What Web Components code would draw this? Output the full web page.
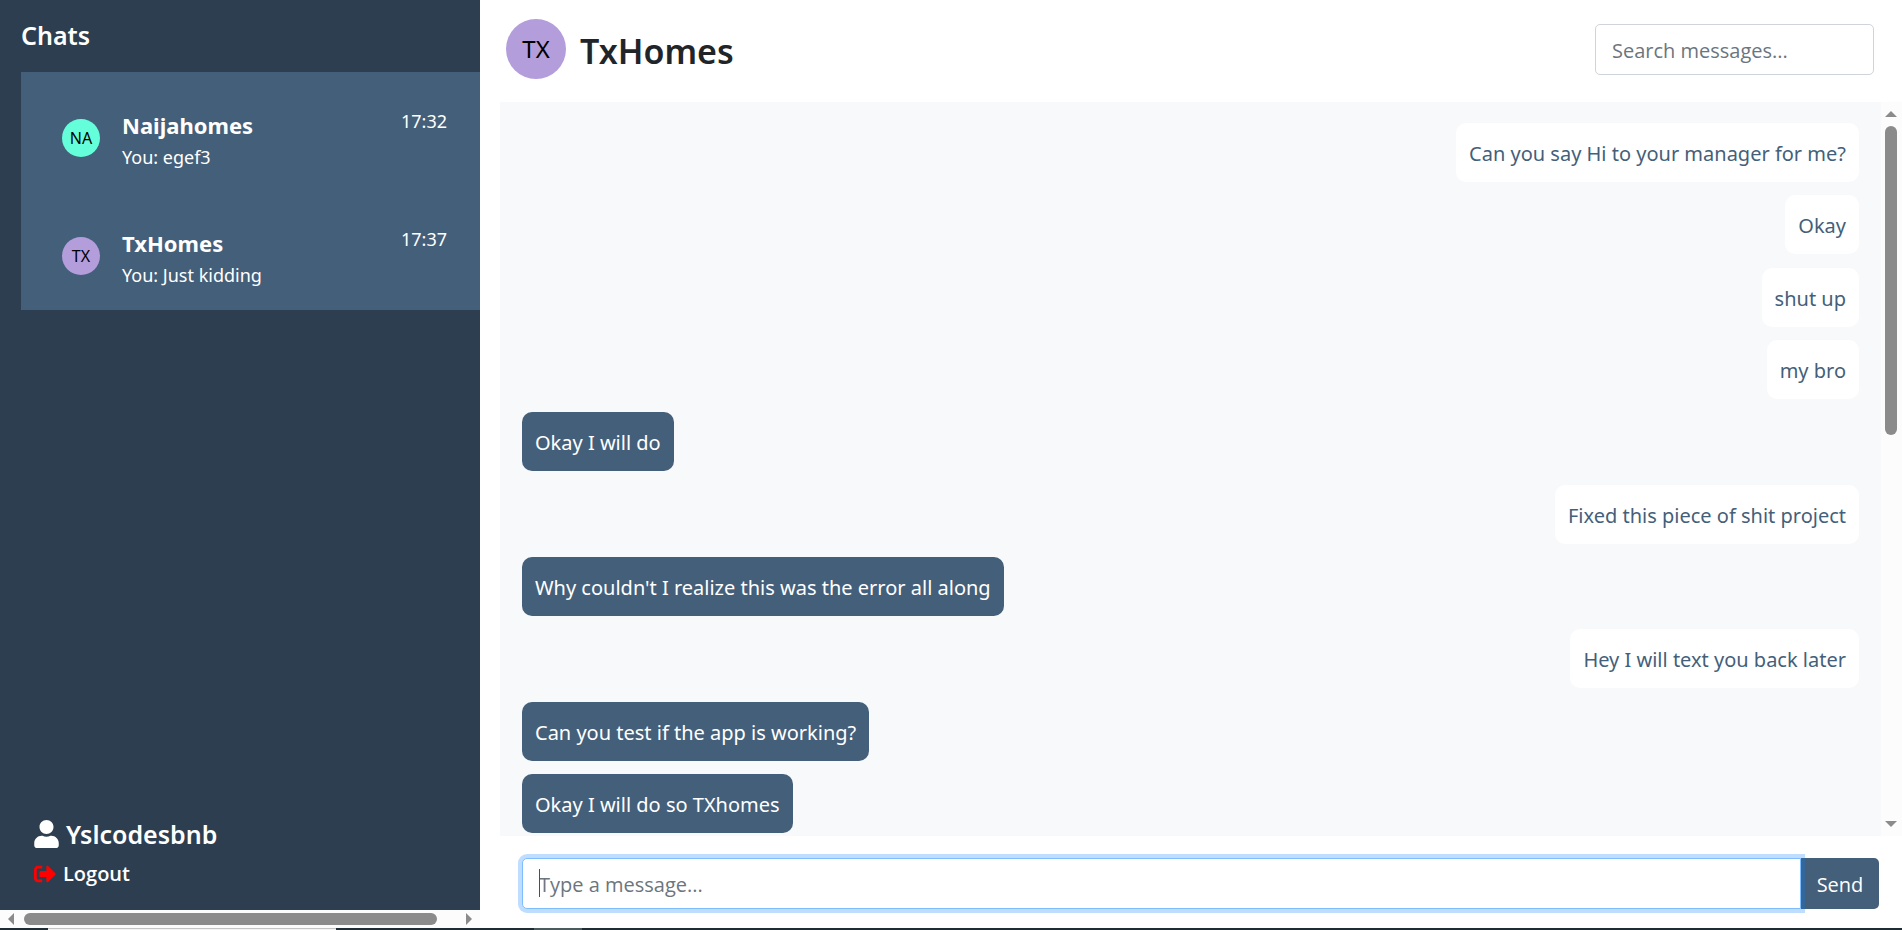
<!DOCTYPE html>
<html lang="en">
<head>
<meta charset="utf-8">
<title>Chats</title>
<style>
html, body { margin: 0; height: 100%; }
body { font-family: "Noto Sans", "Open Sans", sans-serif; font-size: 20px; line-height: 32px; color: #212529; background: #fff; overflow: hidden;
  --navy: #2c3e50; --steel: #445f7a; --track: #fcfcfc; --thumb: #8b8b8b; --muted: #6c757d; --control-font: "Open Sans", "Noto Sans", sans-serif; }
</style>
</head>
<body>
<chat-app>
  <chat-sidebar slot="side">
    <chat-item initials="NA" tint="#64ffda" time="17:32"><span slot="name">Naijahomes</span>You: egef3</chat-item>
    <chat-item initials="TX" tint="#b39ddb" time="17:37"><span slot="name">TxHomes</span>You: Just kidding</chat-item>
    <user-panel slot="foot">Yslcodesbnb</user-panel>
  </chat-sidebar>
  <scroll-track slot="side" axis="x" style="--size: 413; --after: 19"></scroll-track>
  <chat-header initials="TX" tint="#b39ddb">TxHomes</chat-header>
  <message-list>
    <chat-message mine>Can you say Hi to your manager for me?</chat-message>
    <chat-message mine>Okay</chat-message>
    <chat-message mine>shut up</chat-message>
    <chat-message mine>my bro</chat-message>
    <chat-message>Okay I will do</chat-message>
    <chat-message mine>Fixed this piece of shit project</chat-message>
    <chat-message>Why couldn't I realize this was the error all along</chat-message>
    <chat-message mine>Hey I will text you back later</chat-message>
    <chat-message>Can you test if the app is working?</chat-message>
    <chat-message>Okay I will do so TXhomes</chat-message>
  </message-list>
  <message-composer></message-composer>
  <task-strip slot="strip"></task-strip>
</chat-app>

<script>
function define(name, html, setup) {
  const template = document.createElement('template');
  template.innerHTML = html;
  customElements.define(name, class extends HTMLElement {
    constructor() {
      super();
      this.attachShadow({ mode: 'open' }).append(template.content.cloneNode(true));
    }
    connectedCallback() { if (setup) setup(this, this.shadowRoot); }
  });
}

define('chat-app', `
<style>
:host { display: flex; flex-direction: column; height: 100vh; }
.cols { flex: 1; min-height: 0; display: flex; }
aside { flex: 0 0 480px; display: flex; flex-direction: column; }
main { flex: 1; min-width: 0; display: flex; flex-direction: column; padding-left: 20px; }
</style>
<div class="cols"><aside><slot name="side"></slot></aside><main><slot></slot></main></div>
<slot name="strip"></slot>`);

define('chat-sidebar', `
<style>
:host { flex: 1; min-height: 0; box-sizing: border-box; display: flex; flex-direction: column; background: var(--navy); color: #fff; padding: 19px 0 18px 21px; }
h2 { margin: 0 0 21px; font-size: 25px; line-height: 32px; font-weight: 600; }
nav { background: var(--steel); padding-bottom: 2px; }
footer { margin-top: auto; padding-left: 13px; }
</style>
<h2>Chats</h2>
<nav aria-label="Chats"><slot></slot></nav>
<footer><slot name="foot"></slot></footer>`);

define('user-avatar', `
<style>
:host { flex: none; display: flex; align-items: center; justify-content: center; width: 38px; height: 38px; border-radius: 50%; color: #000; font-size: 16px; line-height: 24px; }
:host([large]) { width: 60px; height: 60px; font-size: 24px; }
</style>
<slot></slot>`);

const fillAvatar = (host, root) => {
  const avatar = root.querySelector('user-avatar');
  avatar.textContent = host.getAttribute('initials');
  avatar.style.background = host.getAttribute('tint');
};

define('chat-item', `
<style>
:host { display: block; }
a { display: flex; align-items: flex-start; height: 118px; box-sizing: border-box; padding: 37px 33px 0 41px; color: inherit; text-decoration: none; }
user-avatar { margin: 10px 22px 0 0; }
.body { flex: 1; min-width: 0; font-size: 18px; line-height: 32px; }
.name { font-size: 22px; line-height: 32px; font-weight: 700; }
time { font-size: 18px; line-height: 24px; }
</style>
<a href="#"><user-avatar></user-avatar><div class="body"><div class="name"><slot name="name"></slot></div><slot></slot></div><time></time></a>`,
(host, root) => { fillAvatar(host, root); root.querySelector('time').textContent = host.getAttribute('time'); });

define('user-panel', `
<style>
:host { display: block; font-weight: 600; }
.user { display: flex; align-items: center; gap: 7px; font-size: 25px; line-height: 36px; }
button { display: flex; align-items: center; gap: 7px; margin: 4px 0 0; padding: 0; border: 0; background: none; color: inherit; font: inherit; font-family: var(--control-font); font-size: 20px; line-height: 36px; cursor: pointer; }
svg { display: block; fill: currentColor; }
button svg { fill: #f00; }
</style>
<div class="user"><svg width="25" height="28" viewBox="0 0 448 512" aria-hidden="true"><path d="M224 256c70.7 0 128-57.3 128-128S294.700 0 224 0 96 57.300 96 128s57.300 128 128 128zm89.600 32h-16.700c-22.200 10.200-46.900 16-72.900 16s-50.600-5.800-72.900-16h-16.700C60.200 288 0 348.200 0 422.400V464c0 26.500 21.500 48 48 48h352c26.500 0 48-21.500 48-48v-41.600c0-74.200-60.200-134.400-134.400-134.400z"/></svg><span><slot></slot></span></div>
<button type="button"><svg width="22" height="22" viewBox="0 0 512 512" aria-hidden="true"><path d="M497 273L329 441c-15 15-41 4.500-41-17v-96H152c-13.300 0-24-10.700-24-24v-96c0-13.300 10.700-24 24-24h136V88c0-21.400 25.900-32 41-17l168 168c9.300 9.400 9.300 24.600 0 34zM192 436v-40c0-6.600-5.400-12-12-12H96c-17.700 0-32-14.300-32-32V160c0-17.700 14.300-32 32-32h84c6.600 0 12-5.400 12-12V76c0-6.600-5.400-12-12-12H96c-53 0-96 43-96 96v192c0 53 43 96 96 96h84c6.600 0 12-5.400 12-12z"/></svg>Logout</button>`);

define('scroll-track', `
<style>
:host { flex: none; display: flex; align-items: center; box-sizing: border-box; background: var(--track); gap: 10px; }
:host([axis="x"]) { height: 18px; padding: 0 8px; }
:host([axis="y"]) { width: 21px; flex-direction: column; padding: 9px 5px 9px 4px; gap: 9px; }
svg { flex: none; display: block; fill: var(--thumb); }
.rail { flex: 1; align-self: stretch; display: flex; align-items: center; }
:host([axis="y"]) .rail { flex-direction: column; }
.thumb { flex: var(--size) 0 0; border-radius: 6px; background: var(--thumb); }
:host([axis="x"]) .thumb { height: 12px; }
:host([axis="y"]) .thumb { width: 12px; }
.rest { flex: var(--after) 0 0; }
:host([axis="x"]) .v, :host([axis="y"]) .h { display: none; }
</style>
<svg class="h" width="6" height="12" viewBox="0 0 6 12"><path d="M6 0v12L0 6z"/></svg>
<svg class="v" width="12" height="6" viewBox="0 0 12 6"><path d="M0 6h12L6 0z"/></svg>
<div class="rail"><div class="thumb"></div><div class="rest"></div></div>
<svg class="h" width="6" height="12" viewBox="0 0 6 12"><path d="M0 0v12l6-6z"/></svg>
<svg class="v" width="12" height="6" viewBox="0 0 12 6"><path d="M0 0h12L6 6z"/></svg>`);

define('chat-header', `
<style>
:host { flex: none; display: flex; align-items: center; gap: 14px; height: 102px; box-sizing: border-box; padding: 0 28px 4px 6px; }
h1 { flex: 1; margin: 0; padding-top: 4px; font-size: 34px; line-height: 48px; font-weight: 600; }
input { box-sizing: border-box; width: 279px; height: 51px; padding: 2px 16px 0; border: 1px solid #ced4da; border-radius: 5px; background: #fff; font: inherit; font-family: var(--control-font); color: inherit; }
input::placeholder { color: var(--muted); opacity: 1; }
</style>
<user-avatar large></user-avatar><h1><slot></slot></h1>
<input type="search" placeholder="Search messages..." aria-label="Search messages">`, fillAvatar);

define('message-list', `
<style>
:host { flex: 1; min-height: 0; display: flex; }
.log { flex: 1; min-width: 0; box-sizing: border-box; display: flex; flex-direction: column; justify-content: space-between; gap: 13px; padding: 21px 22px 3px; background: #f8f9fb; overflow: hidden; }
</style>
<div class="log" role="log"><slot></slot></div>
<scroll-track axis="y" style="--size: 309; --after: 377"></scroll-track>`);

define('chat-message', `
<style>
:host { flex: none; align-self: flex-start; box-sizing: border-box; padding: 15px 13px 12px; border-radius: 10px; background: var(--steel); color: #fff; }
:host([mine]) { align-self: flex-end; background: #fff; color: var(--steel); }
</style>
<slot></slot>`);

define('message-composer', `
<style>
:host { flex: none; display: block; padding: 22px 23px 19px 22px; }
form { display: flex; margin: 0; }
.field { position: relative; z-index: 1; flex: 1; min-width: 0; display: flex; }
input { flex: 1; min-width: 0; box-sizing: border-box; height: 51px; padding: 2px 16px 0; border: 1px solid #80bdff; border-radius: 5px 0 0 5px; outline: 0; background: #fff; box-shadow: 0 0 0 4px rgba(0, 123, 255, .25); font: inherit; font-family: var(--control-font); color: inherit; }
input::placeholder { color: var(--muted); opacity: 1; }
.caret { position: absolute; left: 17px; top: 11px; width: 1px; height: 28px; background: #495057; }
button { flex: none; width: 78px; height: 51px; padding: 2px 0 0; border: 0; border-radius: 0 5px 5px 0; background: var(--steel); color: #fff; font: inherit; font-family: var(--control-font); cursor: pointer; }
</style>
<form><div class="field"><input type="text" placeholder="Type a message..." aria-label="Message"><span class="caret"></span></div><button type="button">Send</button></form>`);

define('task-strip', `
<style>
:host { flex: none; display: flex; height: 2px; background: #1f2c33; }
.light { margin-left: 48px; width: 288px; box-sizing: border-box; border-top: 1px solid #c4c4c4; background: #f3f3f3; }
.app { margin-left: 198px; width: 48px; background: #4b5a5c; }
</style>
<div class="light"></div><div class="app"></div>`);
</script>
</body>
</html>
